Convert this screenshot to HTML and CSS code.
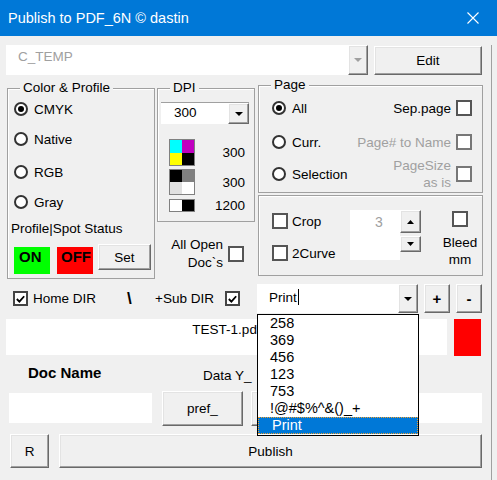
FILE: index.html
```html
<!DOCTYPE html>
<html lang="en">
<head>
    <meta charset="UTF-8">
    <title>Publish to PDF_6N</title>
    <link rel="stylesheet" href="styles.css">
</head>
<body>
<div class="window">
    <div class="titlebar">
        <span class="title">Publish to PDF_6N © dastin</span>
        <svg class="close" width="12" height="12" viewBox="0 0 12 12"><path d="M0.5 0.5L11.5 11.5M11.5 0.5L0.5 11.5" stroke="#fff" stroke-width="1.1"/></svg>
    </div>

    <div class="client">
        <!-- folder -->
        <div class="row row-folder">
            <div class="combo combo-folder">
                <span class="combo-text disabled">C_TEMP</span>
                <span class="btn combo-btn"><svg width="8" height="4" viewBox="0 0 8 4"><path d="M0 0H8L4 4Z" fill="#a0a0a0"/></svg></span>
            </div>
            <div class="btn btn-edit">Edit</div>
        </div>

        <div class="row row-main">
            <!-- color & profile -->
            <div class="group group-color">
                <span class="legend">Color &amp; Profile</span>
                <div class="opt opt-1"><span class="radio checked"></span>CMYK</div>
                <div class="opt opt-2"><span class="radio"></span>Native</div>
                <div class="opt opt-3"><span class="radio"></span>RGB</div>
                <div class="opt opt-4"><span class="radio"></span>Gray</div>
                <div class="status-label">Profile|Spot Status</div>
                <div class="status-row">
                    <span class="flag flag-on">ON</span>
                    <span class="flag flag-off">OFF</span>
                    <span class="btn btn-set">Set</span>
                </div>
            </div>

            <!-- dpi -->
            <div class="col-mid">
                <div class="group group-dpi">
                    <span class="legend">DPI</span>
                    <div class="combo combo-dpi">
                        <span class="combo-text">300</span>
                        <span class="btn combo-btn"><svg width="8" height="4" viewBox="0 0 8 4"><path d="M0 0H8L4 4Z"/></svg></span>
                    </div>
                    <div class="dpi-row dpi-cmyk">
                        <span class="swatch"><i class="c"></i><i class="m"></i><i class="y"></i><i class="k"></i></span>
                        <span class="dpi-val">300</span>
                    </div>
                    <div class="dpi-row dpi-gray">
                        <span class="swatch"><i class="k"></i><i class="g"></i><i class="lg"></i><i class="w"></i></span>
                        <span class="dpi-val">300</span>
                    </div>
                    <div class="dpi-row dpi-bw">
                        <span class="swatch swatch-bw"><i class="w"></i><i class="k"></i></span>
                        <span class="dpi-val">1200</span>
                    </div>
                </div>
                <div class="all-open">
                    <span class="all-open-text">All Open<br>Doc`s</span>
                    <span class="check"></span>
                </div>
            </div>

            <!-- page + crop -->
            <div class="col-right">
                <div class="group group-page">
                    <span class="legend">Page</span>
                    <div class="page-row page-row-1">
                        <span class="opt"><span class="radio checked"></span>All</span>
                        <span class="page-opt">Sep.page<span class="check"></span></span>
                    </div>
                    <div class="page-row page-row-2">
                        <span class="opt"><span class="radio"></span>Curr.</span>
                        <span class="page-opt disabled">Page# to Name<span class="check check-off"></span></span>
                    </div>
                    <div class="page-row page-row-3">
                        <span class="opt"><span class="radio"></span>Selection</span>
                        <span class="page-opt disabled"><span class="two-line">PageSize<br>as is</span><span class="check check-off"></span></span>
                    </div>
                </div>

                <div class="group group-crop">
                    <div class="crop-left">
                        <div class="crop-opt crop-opt-1"><span class="check"></span>Crop</div>
                        <div class="crop-opt crop-opt-2"><span class="check"></span>2Curve</div>
                    </div>
                    <div class="spin">
                        <div class="spin-field">3</div>
                        <div class="spin-btns">
                            <span class="btn spin-up"><svg width="7" height="4" viewBox="0 0 7 4"><path d="M0 4H7L3.5 0Z"/></svg></span>
                            <span class="btn spin-down"><svg width="7" height="4" viewBox="0 0 7 4"><path d="M0 0H7L3.5 4Z"/></svg></span>
                        </div>
                    </div>
                    <div class="bleed">
                        <span class="check"></span>
                        <span class="bleed-text">Bleed<br>mm</span>
                    </div>
                </div>
            </div>
        </div>

        <!-- directory -->
        <div class="row row-dir">
            <span class="check check-on chk-home"><svg width="12" height="12" viewBox="0 0 12 12"><path d="M2 6L4.8 8.8L10 3" fill="none" stroke="#000" stroke-width="2"/></svg></span>
            <span class="lbl-home">Home DIR</span>
            <span class="slash">\</span>
            <span class="lbl-sub">+Sub DIR</span>
            <span class="check check-on"><svg width="12" height="12" viewBox="0 0 12 12"><path d="M2 6L4.8 8.8L10 3" fill="none" stroke="#000" stroke-width="2"/></svg></span>
            <div class="combo combo-print">
                <span class="combo-text">Print<span class="caret"></span></span>
                <span class="btn combo-btn"><svg width="8" height="4" viewBox="0 0 8 4"><path d="M0 0H8L4 4Z"/></svg></span>
            </div>
            <span class="btn btn-small">+</span>
            <span class="btn btn-small">-</span>
        </div>

        <div class="row row-path">
            <div class="field field-path">TEST-1.pdf</div>
            <div class="red-box"></div>
        </div>

        <div class="row row-labels">
            <span class="lbl-doc">Doc Name</span>
            <span class="lbl-data">Data Y_</span>
        </div>

        <div class="row row-fields">
            <div class="field field-doc"></div>
            <span class="btn btn-pref">pref_</span>
            <span class="btn btn-suf"></span>
            <div class="field field-data"></div>
        </div>

        <div class="row row-bottom">
            <span class="btn btn-r">R</span>
            <span class="btn btn-publish">Publish</span>
        </div>
    </div>

    <!-- open dropdown of the Print combo -->
    <ul class="dropdown">
        <li>258</li>
        <li>369</li>
        <li>456</li>
        <li>123</li>
        <li>753</li>
        <li>!@#$%^&amp;()_+</li>
        <li class="selected">Print</li>
    </ul>
</div>
</body>
</html>
```

FILE: styles.css
```css
* {
    margin: 0;
    padding: 0;
    box-sizing: border-box;
}

body {
    background: #f0f0f0;
    font-family: "Liberation Sans", Arial, sans-serif;
    font-size: 13.5px;
    color: #000;
    overflow: hidden;
}

.window {
    position: relative;
    width: 497px;
    height: 480px;
}

/* title bar */
.titlebar {
    height: 36px;
    background: #0078d7;
    color: #fff;
    display: flex;
    align-items: center;
    padding: 0 18px 0 8px;
}

.title {
    font-size: 14.5px;
    flex: 1;
}

.client {
    width: 492px;
    height: 444px;
    border-right: 1px solid #a0a0a0;
}

.row {
    display: flex;
}

.disabled {
    color: #a0a0a0;
}

/* common controls */
.btn {
    display: flex;
    align-items: center;
    justify-content: center;
    background: #f0f0f0;
    border: 1px solid;
    border-color: #fff #696969 #696969 #fff;
    box-shadow: inset -1px -1px 0 #a0a0a0, inset 1px 1px 0 #e3e3e3;
}

.field {
    background: #fff;
}

.combo {
    display: flex;
    background: #fff;
}

.combo-text {
    flex: 1;
    display: flex;
    align-items: center;
}

.combo-btn {
    width: 20px;
}

.radio {
    position: relative;
    width: 14px;
    height: 14px;
    border: 2px solid #333;
    border-radius: 50%;
    background: #fff;
    margin-right: 6px;
    flex-shrink: 0;
}

.radio.checked::after {
    content: '';
    position: absolute;
    left: 2px;
    top: 2px;
    width: 6px;
    height: 6px;
    border-radius: 50%;
    background: #000;
}

.check {
    display: flex;
    align-items: center;
    justify-content: center;
    width: 16px;
    height: 16px;
    border: 2px solid #555;
    background: #fff;
    flex-shrink: 0;
}

.check-off {
    border-color: #777;
}

.check-on {
    width: 15px;
    height: 15px;
    border-color: #444;
}

.group {
    position: relative;
    border: 1px solid #a0a0a0;
    box-shadow: inset 1px 1px 0 #fff;
}

.legend {
    position: absolute;
    top: -9px;
    left: 12px;
    padding: 0 3px;
    line-height: 16px;
    background: #f0f0f0;
}

/* row 1 */
.row-folder {
    margin: 9px 0 0 6px;
    height: 30px;
}

.combo-folder {
    width: 362px;
}

.combo-folder .combo-text {
    padding-left: 12px;
    padding-bottom: 7px;
}

.btn-edit {
    margin: 1px 0 0 6px;
    width: 108px;
    height: 29px;
}

/* color & profile */
.group-color {
    margin: 13px 0 0 7px;
    width: 148px;
    height: 191px;
}

.opt {
    display: flex;
    align-items: center;
    height: 20px;
}

.group-color .opt {
    padding-left: 6px;
}

.opt-1 { margin-top: 10px; }
.opt-2 { margin-top: 10px; }
.opt-3 { margin-top: 13px; }
.opt-4 { margin-top: 10px; }

.status-label {
    margin-top: 9px;
    padding-left: 3px;
    line-height: 16px;
}

.status-row {
    display: flex;
    margin-top: 7px;
    padding-left: 6px;
}

.flag {
    margin-top: 3px;
    width: 36px;
    height: 27px;
    padding: 3px 0 0 5px;
    font-weight: bold;
    font-size: 15px;
    line-height: 14px;
}

.flag-on {
    background: #00ff00;
}

.flag-off {
    margin-left: 7px;
    background: #ff0000;
    padding-left: 4px;
}

.btn-set {
    margin-left: 5px;
    width: 53px;
    height: 26px;
}

/* dpi */
.col-mid {
    margin-left: 2px;
    width: 98px;
}

.group-dpi {
    margin-top: 13px;
    height: 134px;
}

.combo-dpi {
    margin: 13px 0 0 3px;
    width: 88px;
    height: 22px;
    border-top: 1px solid #a0a0a0;
}

.combo-dpi .combo-text {
    padding-left: 13px;
    padding-bottom: 2px;
}

.combo-dpi .combo-btn {
    width: 21px;
}

.dpi-row {
    display: flex;
    align-items: center;
    padding: 0 9px 0 11px;
}

.dpi-cmyk { margin-top: 15px; height: 27px; }
.dpi-gray { margin-top: 3px; height: 26px; }
.dpi-bw { margin-top: 4px; height: 13px; }

.dpi-val {
    margin-left: auto;
}

.swatch {
    display: grid;
    grid-template-columns: 1fr 1fr;
    grid-template-rows: 1fr 1fr;
    width: 26px;
    height: 100%;
    border: 1px solid #808080;
}

.swatch-bw {
    grid-template-rows: 1fr;
}

.swatch .c { background: #00ffff; }
.swatch .m { background: #c000c0; }
.swatch .y { background: #ffff00; }
.swatch .k { background: #000; }
.swatch .g { background: #808080; }
.swatch .lg { background: #e0e0e0; }
.swatch .w { background: #fff; }

.all-open {
    display: flex;
    align-items: center;
    justify-content: flex-end;
    margin-top: 14px;
    padding-right: 11px;
}

.all-open-text {
    text-align: right;
    line-height: 18px;
    margin-right: 5px;
}

/* page */
.col-right {
    margin-left: 3px;
    width: 225px;
}

.group-page {
    margin-top: 10px;
    height: 108px;
}

.page-row {
    display: flex;
    align-items: center;
    justify-content: space-between;
    height: 24px;
    padding: 0 10px 0 13px;
}

.page-row-1 { margin-top: 10px; }
.page-row-2 { margin-top: 10px; }
.page-row-3 { margin-top: 8px; }

.page-opt {
    display: flex;
    align-items: center;
}

.page-opt .check {
    margin-left: 5px;
}

.two-line {
    text-align: right;
    line-height: 17px;
}

/* crop */
.group-crop {
    display: flex;
    align-items: flex-start;
    margin-top: 2px;
    height: 81px;
}

.crop-left {
    width: 91px;
    padding-left: 13px;
}

.crop-opt {
    display: flex;
    align-items: center;
    height: 20px;
}

.crop-opt .check {
    margin-right: 4px;
}

.crop-opt-1 { margin-top: 15px; }
.crop-opt-2 { margin-top: 12px; }

.spin {
    display: flex;
    margin-top: 14px;
}

.spin-field {
    width: 50px;
    height: 50px;
    background: #fff;
    color: #a0a0a0;
    text-align: center;
    padding: 4px 0 0 8px;
    line-height: 16px;
    font-size: 14px;
}

.spin-btns {
    display: flex;
    flex-direction: column;
    width: 21px;
}

.spin-up {
    height: 23px;
}

.spin-down {
    margin-top: 3px;
    height: 16px;
}

.bleed {
    display: flex;
    flex-direction: column;
    align-items: center;
    margin: 15px 0 0 19px;
    width: 40px;
}

.bleed-text {
    margin-top: 7px;
    line-height: 17px;
    text-align: center;
}

/* directory */
.row-dir {
    align-items: center;
    margin-top: 5px;
    height: 29px;
}

.chk-home {
    margin-left: 13px;
}

.lbl-home {
    margin-left: 5px;
    width: 94px;
}

.slash {
    width: 28px;
    font-weight: bold;
    font-size: 17px;
}

.lbl-sub {
    width: 70px;
}

.combo-print {
    margin-left: 17px;
    width: 161px;
    height: 29px;
}

.combo-print .combo-text {
    padding-left: 12px;
    padding-bottom: 3px;
}

.caret {
    display: inline-block;
    width: 1px;
    height: 16px;
    margin-left: 1px;
    background: #000;
}

.btn-small {
    margin-left: 6px;
    width: 26px;
    height: 29px;
    font-size: 15px;
    font-weight: bold;
}

.row-path {
    margin: 6px 0 0 6px;
    align-items: flex-start;
}

.field-path {
    width: 441px;
    height: 36px;
    text-align: center;
    padding-top: 3px;
    line-height: 16px;
}

.red-box {
    margin-left: 7px;
    width: 27px;
    height: 37px;
    background: #ff0000;
}

.row-labels {
    margin-top: 8px;
    height: 18px;
}

.lbl-doc {
    margin-left: 28px;
    width: 175px;
    font-weight: bold;
    font-size: 15px;
    line-height: 18px;
}

.lbl-data {
    margin-top: 3px;
    line-height: 18px;
}

.row-fields {
    margin-top: 9px;
    align-items: flex-start;
}

.field-doc {
    margin: 2px 0 0 9px;
    width: 143px;
    height: 30px;
}

.btn-pref {
    margin-left: 10px;
    width: 81px;
    height: 35px;
}

.btn-suf {
    margin-left: 8px;
    width: 80px;
    height: 35px;
}

.field-data {
    margin: 2px 0 0 8px;
    width: 143px;
    height: 30px;
}

.row-bottom {
    margin-top: 8px;
}

.btn-r {
    margin-left: 10px;
    width: 39px;
    height: 34px;
}

.btn-publish {
    margin-left: 10px;
    width: 423px;
    height: 34px;
}

/* open list of the Print combo */
.dropdown {
    position: absolute;
    left: 257px;
    top: 314px;
    width: 162px;
    height: 122px;
    list-style: none;
    background: #fff;
    border: 1px solid #000;
    font-size: 14.5px;
}

.dropdown li {
    height: 17px;
    line-height: 17px;
    padding-left: 12px;
}

.dropdown li.selected {
    background: #0078d7;
    color: #fff;
    outline: 1px dotted #f0a030;
    outline-offset: -1px;
    padding-left: 14px;
}
```
